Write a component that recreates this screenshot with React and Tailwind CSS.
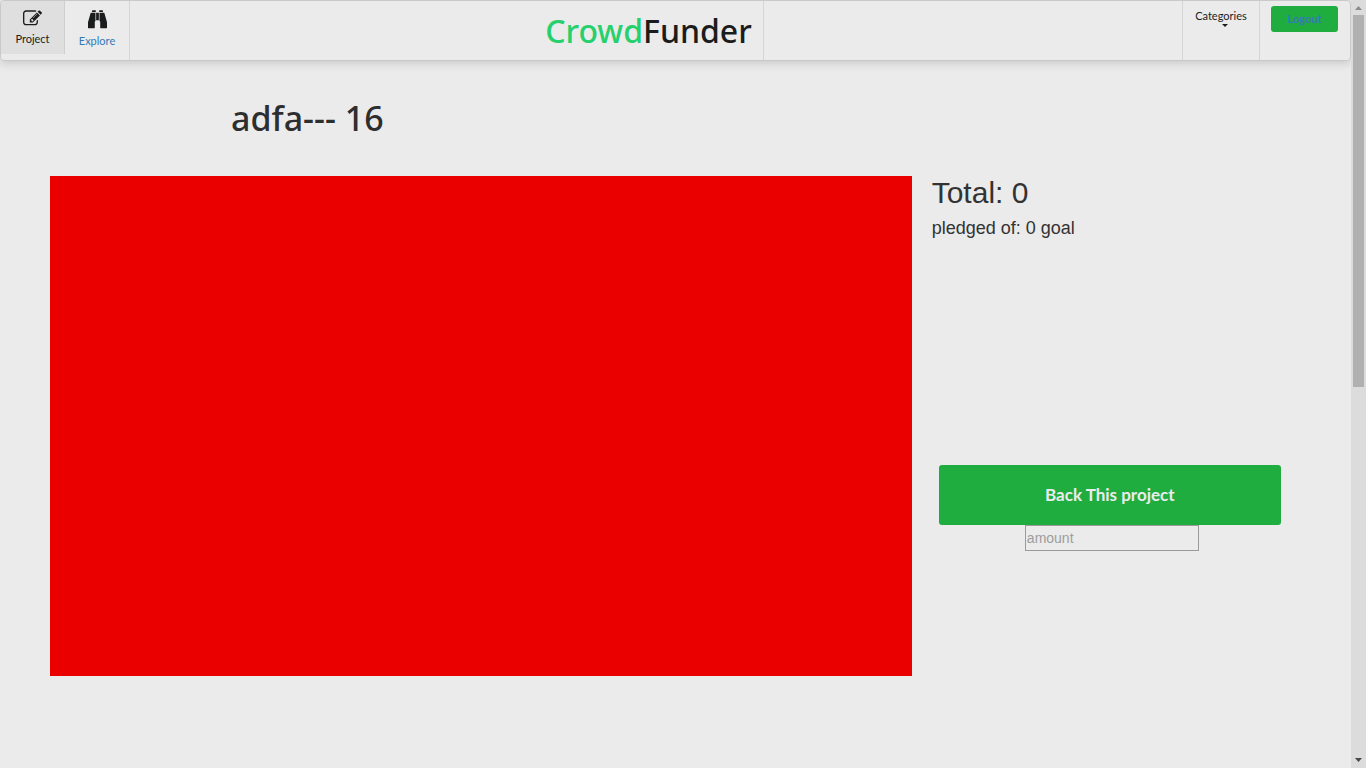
function EditIcon() {
  return (
    <svg viewBox="0 0 1792 1792" className="h-[19px] w-[19px]" fill="currentColor" aria-hidden="true">
      <path d="M888 1184l116-116-152-152-116 116v56h96v96h56zm440-720q-16-16-33 1l-350 350q-17 17-1 33t33-1l350-350q17-17 1-33zm80 594v190q0 119-84.5 203.5t-203.5 84.5h-832q-119 0-203.5-84.5t-84.5-203.5v-832q0-119 84.5-203.5t203.5-84.5h832q63 0 117 25 15 7 18 23 3 17-9 29l-49 49q-14 14-32 8-23-6-45-6h-832q-66 0-113 47t-47 113v832q0 66 47 113t113 47h832q66 0 113-47t47-113v-126q0-13 9-22l64-64q15-15 35-7t20 29zm-96-738l288 288-672 672h-288v-288zm444 132l-92 92-288-288 92-92q28-28 68-28t68 28l152 152q28 28 28 68t-28 68z" />
    </svg>
  );
}

function BinocularsIcon() {
  return (
    <svg viewBox="0 0 1792 1792" className="h-[19px] w-[19px]" fill="currentColor" aria-hidden="true">
      <path d="M704 256v768q0 26-19 45t-45 19v576q0 26-19 45t-45 19h-512q-26 0-45-19t-19-45v-512l249-873q7-23 31-23h424zm320 0v704h-256v-704h256zm768 896v512q0 26-19 45t-45 19h-512q-26 0-45-19t-19-45v-576q-26 0-45-19t-19-45v-768h424q24 0 31 23zm-1056-1088v128h-352v-128q0-14 9-23t23-9h288q14 0 23 9t9 23zm672 0v128h-352v-128q0-14 9-23t23-9h288q14 0 23 9t9 23z" />
    </svg>
  );
}

function Navigation() {
  return (
    <nav className="flex h-[61px] justify-between rounded border border-[#c9c9ca] font-['Lato',sans-serif] text-[11px] leading-4 text-[#1b1c1d] shadow-[0_2px_10px_rgba(34,36,38,0.18)]">
      <div className="flex">
        <a href="#project" className="flex h-[53px] w-16 flex-col items-center gap-[3px] rounded-tl border-r border-[#cfcfcf] bg-[#dfdfdf] pt-2">
          <EditIcon />
          Project
        </a>
        <a href="#explore" className="flex w-[65px] flex-col items-center gap-1 border-r border-[#d5d5d5] pt-[9px]">
          <BinocularsIcon />
          <span className="text-[#337ab7]">Explore</span>
        </a>
      </div>
      <div className="flex pr-[14px]">
        <a href="#home" className="flex items-center border-r border-[#d5d5d5] px-[11px] font-['Noto_Sans',sans-serif] text-[32px] leading-10 font-medium">
          <span className="text-[#26d06c]">Crowd</span>
          <span>Funder</span>
        </a>
      </div>
      <div className="flex">
        <button type="button" className="flex w-[78px] flex-col items-center border-x border-[#d5d5d5] pt-[7px]">
          Categories
          <svg viewBox="0 0 14 3" className="h-[3px] w-[14px]" fill="currentColor" aria-hidden="true">
            <path d="M8 0h6L11 3z" />
          </svg>
        </button>
        <div className="pt-[5px] pr-3 pl-[11px]">
          <button type="button" className="h-[26px] w-[67px] rounded-[3px] bg-[#20ad40] font-bold text-[#337ab7]">
            Logout
          </button>
        </div>
      </div>
    </nav>
  );
}

function ScrollTrack() {
  return (
    <div className="flex w-[15px] shrink-0 flex-col items-center bg-[#dcdcdc]" aria-hidden="true">
      <svg viewBox="0 0 15 15" className="h-[15px] w-[15px]" fill="#8b8b8b">
        <path d="M4 10h7L7.500 6z" />
      </svg>
      <div className="grid w-full grow grid-rows-[62fr_61fr] px-[2px]">
        <div className="bg-[#b0b0b0]" />
      </div>
      <svg viewBox="0 0 15 15" className="h-[15px] w-[15px]" fill="#484848">
        <path d="M4 5h7L7.500 9z" />
      </svg>
    </div>
  );
}

export default function App() {
  return (
    <div className="flex min-h-screen bg-[#ebebeb] font-['Liberation_Sans',sans-serif] text-[#333]">
      <div className="min-w-0 grow">
        <Navigation />
        <main className="px-[50px] pt-8">
          <h1 className="pl-[181px] font-['Noto_Sans',sans-serif] text-[34px] leading-[50px] font-medium text-[#2d2e2f]">
            adfa--- 16
          </h1>
          <div className="mt-[33px] grid grid-cols-[minmax(0,7fr)_minmax(0,3fr)] gap-5">
            <div className="h-[500px] bg-[#eb0000]" />
            <section>
              <h2 className="text-[30px] leading-[33px]">Total: 0</h2>
              <p className="mt-[9px] text-lg leading-5">pledged of: 0 goal</p>
              <form className="mt-[227px] flex flex-col items-center pr-5 pl-[7px]" onSubmit={(e) => e.preventDefault()}>
                <button type="submit" className="h-[60px] w-full rounded-[3px] bg-[#20ad40] font-['Lato',sans-serif] text-[17px] font-bold text-[#ebebeb]">
                  Back This project
                </button>
                <input
                  type="text"
                  aria-label="amount"
                  placeholder="amount"
                  className="ml-1 h-[26px] w-[174px] border border-[#9a9a9a] px-px text-sm placeholder:text-[#9d9d9d]"
                />
              </form>
            </section>
          </div>
        </main>
      </div>
      <ScrollTrack />
    </div>
  );
}
